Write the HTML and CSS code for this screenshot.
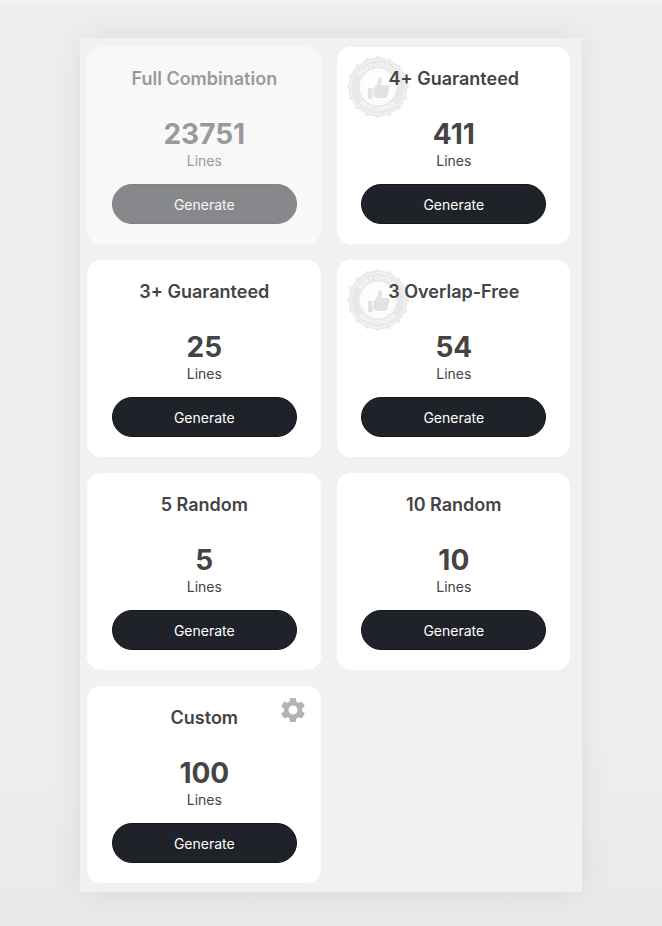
FILE: index.html
```html
<!DOCTYPE html>
<html lang="en">
<head>
<meta charset="utf-8">
<title>Generate Lines</title>
<link rel="stylesheet" href="styles.css">
</head>
<body>
<svg class="defs" width="0" height="0" aria-hidden="true">
  <defs>
    <symbol id="stamp" viewBox="0 0 64 64">
      <circle class="st-scallop" cx="32" cy="32" r="29.4"/>
      <circle class="st-band" cx="32" cy="32" r="29.4"/>
      <circle class="st-line" cx="32" cy="32" r="27.4"/>
      <path id="st-top" class="st-none" d="M11.6 32a20.4 20.4 0 0 1 40.8 0"/>
      <path id="st-bot" class="st-none" d="M7.6 32a24.4 24.4 0 0 0 48.8 0"/>
      <text class="st-text"><textPath href="#st-top" startOffset="50%">BEST CHOICE</textPath></text>
      <text class="st-text"><textPath href="#st-bot" startOffset="50%">BEST CHOICE</textPath></text>
      <circle class="st-inner" cx="32" cy="32" r="18.5"/>
      <circle class="st-dots" cx="32" cy="32" r="16.500"/>
      <path class="st-thumb" d="M22 33h4.500v11H22zM27.500 33.500l4-5 1.500-6.500c2.300-.5 3.200 2 2.800 4.500l-.8 3.500h6.500c1.700 0 2.400 1.500 2 3l-2.300 8c-.4 1.300-1.300 2-2.500 2h-8l-3.200-1.500z"/>
    </symbol>
  </defs>
</svg>
<main class="panel">
  <section class="card card-off">
    <h2 class="title">Full Combination</h2>
    <div class="count">23751</div>
    <div class="unit">Lines</div>
    <button class="btn" type="button">Generate</button>
  </section>
  <section class="card">
    <svg class="stamp"><use href="#stamp"/></svg>
    <h2 class="title">4+ Guaranteed</h2>
    <div class="count">411</div>
    <div class="unit">Lines</div>
    <button class="btn" type="button">Generate</button>
  </section>
  <section class="card">
    <h2 class="title">3+ Guaranteed</h2>
    <div class="count">25</div>
    <div class="unit">Lines</div>
    <button class="btn" type="button">Generate</button>
  </section>
  <section class="card">
    <svg class="stamp"><use href="#stamp"/></svg>
    <h2 class="title">3 Overlap-Free</h2>
    <div class="count">54</div>
    <div class="unit">Lines</div>
    <button class="btn" type="button">Generate</button>
  </section>
  <section class="card">
    <h2 class="title">5 Random</h2>
    <div class="count">5</div>
    <div class="unit">Lines</div>
    <button class="btn" type="button">Generate</button>
  </section>
  <section class="card">
    <h2 class="title">10 Random</h2>
    <div class="count">10</div>
    <div class="unit">Lines</div>
    <button class="btn" type="button">Generate</button>
  </section>
  <section class="card">
    <svg class="gear" viewBox="0 0 24 24"><path d="M19.140 12.940c.04-.3.06-.61.06-.94 0-.32-.02-.64-.07-.94l2.030-1.580c.18-.14.23-.41.12-.61l-1.920-3.320c-.12-.22-.37-.29-.59-.22l-2.390.96c-.5-.38-1.030-.7-1.620-.94l-.36-2.540c-.04-.24-.24-.41-.48-.41h-3.840c-.24 0-.43.17-.47.41l-.36 2.540c-.59.24-1.130.57-1.620.94l-2.390-.96c-.22-.08-.47 0-.59.22L2.740 8.870c-.12.21-.08.47.12.61l2.030 1.580c-.05.3-.09.63-.09.94s.02.64.07.94l-2.030 1.580c-.18.14-.23.41-.12.61l1.920 3.320c.12.22.37.29.59.22l2.390-.96c.5.38 1.030.7 1.620.94l.36 2.540c.05.24.24.41.48.41h3.840c.24 0 .44-.17.47-.41l.36-2.540c.59-.24 1.130-.56 1.620-.94l2.390.96c.22.08.47 0 .59-.22l1.920-3.320c.12-.22.07-.47-.12-.61l-2.010-1.580zM12 15.600c-1.980 0-3.600-1.620-3.600-3.600s1.620-3.600 3.600-3.600 3.600 1.620 3.600 3.600-1.620 3.600-3.600 3.600z"/></svg>
    <h2 class="title">Custom</h2>
    <div class="count">100</div>
    <div class="unit">Lines</div>
    <button class="btn" type="button">Generate</button>
  </section>
</main>
</body>
</html>
```
FILE: styles.css
```css
* { box-sizing: border-box; }
html, body { margin: 0; height: 100%; }
body {
  height: 926px;
  overflow: hidden;
  padding-top: 35px;
  border-top: 3px solid #f3f3f4;
  background: linear-gradient(#eeeef0, #eeeef0 80%, #e9e9eb);
  font-family: Inter, "Liberation Sans", sans-serif;
  color: #444;
}
.defs { position: absolute; }
.panel {
  width: 502px;
  height: 854px;
  margin: 0 auto;
  padding: 9px 0 0 7.3px;
  background: #f1f1f1;
  box-shadow: 0 0 30px rgba(0, 0, 0, 0.075);
  display: grid;
  grid-template-columns: 233.5px 233.5px;
  grid-auto-rows: 197px;
  gap: 16px;
}
.card {
  position: relative;
  background: #fff;
  border-radius: 14px;
  padding: 20px 24px 20px 24.500px;
  display: flex;
  flex-direction: column;
  align-items: center;
}
.card-off { opacity: 0.5; }
.title {
  margin: 0;
  position: relative;
  font-size: 18px;
  line-height: 24px;
  font-weight: 600;
  text-align: center;
}
.count {
  margin-top: 26px;
  font-size: 28px;
  line-height: 34px;
  font-weight: 700;
}
.unit {
  margin-top: 1px;
  font-size: 14px;
  line-height: 18px;
}
.btn {
  margin-top: 14px;
  width: 100%;
  height: 40px;
  padding: 2px 0 0;
  border: 1px solid #14161a;
  border-radius: 20px;
  background: #1f2229;
  color: #fff;
  font: 400 14px/20px Inter, "Liberation Sans", sans-serif;
}
.stamp {
  position: absolute;
  left: 9px;
  top: 8px;
  width: 64px;
  height: 64px;
}
.gear {
  position: absolute;
  right: 13px;
  top: 9px;
  width: 30px;
  height: 30px;
  fill: #b3b3b3;
}
.st-scallop { fill: none; stroke: #e9e9e9; stroke-width: 3.6; stroke-linecap: round; stroke-dasharray: 0 11.55; }
.st-band { fill: #e9e9e9; }
.st-line { fill: none; stroke: #f8f8f8; stroke-width: 0.9; }
.st-none { fill: none; }
.st-text {
  font: 700 5.500px Inter, "Liberation Sans", sans-serif;
  letter-spacing: 0.4px;
  fill: #fbfbfb;
  text-anchor: middle;
}
.st-inner { fill: #fdfdfd; }
.st-dots { fill: none; stroke: #e8e8e8; stroke-width: 0.7; stroke-dasharray: 0.7 2.2; }
.st-thumb { fill: #e2e2e2; }
```
